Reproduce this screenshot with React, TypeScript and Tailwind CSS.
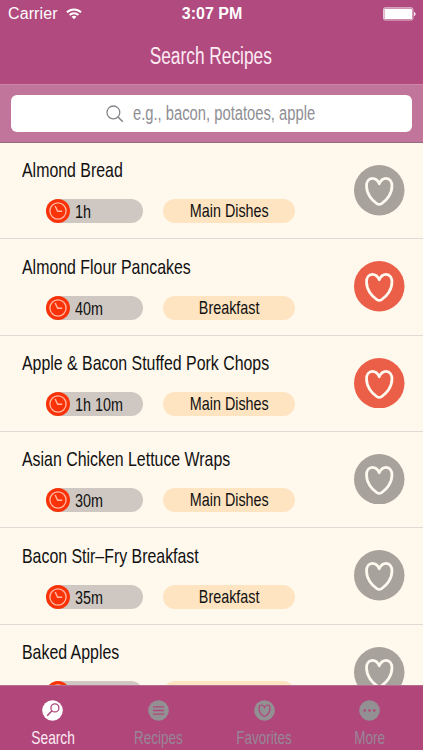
import type { ReactNode } from 'react'

type Recipe = {
  name: string
  time: string
  category: string
  favorite?: boolean
}

const recipes: Recipe[] = [
  { name: 'Almond Bread', time: '1h', category: 'Main Dishes' },
  { name: 'Almond Flour Pancakes', time: '40m', category: 'Breakfast', favorite: true },
  { name: 'Apple & Bacon Stuffed Pork Chops', time: '1h 10m', category: 'Main Dishes', favorite: true },
  { name: 'Asian Chicken Lettuce Wraps', time: '30m', category: 'Main Dishes' },
  { name: 'Bacon Stir–Fry Breakfast', time: '35m', category: 'Breakfast' },
  { name: 'Baked Apples', time: '', category: '' },
]

const heart =
  'M25 18.6C23.4 14.8 21 13.2 18.2 13.2C14.6 13.2 12.4 16.4 12.4 20.6C12.4 28.6 17.6 35.2 22.6 38.2C24.2 39.2 25.8 39.2 27.4 38.2C32.4 35.2 37.6 28.6 37.6 20.6C37.6 16.4 35.4 13.2 31.8 13.2C29 13.2 26.6 14.8 25 18.6Z'

function StatusBar() {
  return (
    <div className="grid h-[28px] grid-cols-3 items-center pl-2 pr-[7px] text-white">
      <div className="flex items-center gap-[8px]">
        <span className="text-[16px] leading-none tracking-[0.1px]">Carrier</span>
        <svg width="16" height="12.2" viewBox="0 0 17 13" fill="none" stroke="white" strokeWidth="2.1">
          <path d="M1 4.6C5.2 0.5 11.8 0.5 16 4.6" />
          <path d="M3.8 7.5C6.4 4.9 10.6 4.9 13.2 7.5" />
          <path d="M8.5 12L5.9 9.4C7.3 8 9.7 8 11.1 9.4Z" fill="white" stroke="none" />
        </svg>
      </div>
      <span className="text-center text-[16px] font-bold leading-none">3:07 PM</span>
      <svg className="justify-self-end" width="33" height="14" viewBox="0 0 33 14">
        <rect x="0.5" y="0.8" width="29.4" height="12.2" rx="1.6" fill="none" stroke="white" strokeOpacity="0.7" />
        <rect x="1.4" y="1.7" width="27.6" height="10.4" rx="0.6" fill="white" />
        <path d="M31.1 4.9C33 5.3 33 8.6 31.1 9Z" fill="white" />
      </svg>
    </div>
  )
}

function SearchBar() {
  return (
    <div className="h-[59px] border-b border-t border-b-[#966b82] border-t-[#cb87a8] bg-[#c1759b] px-[11px] pt-[10px]">
      <div className="flex h-[37px] items-center rounded-[6px] bg-white pl-[95px] text-[#8e8e93]">
        <svg width="18" height="18" viewBox="0 0 18 18" fill="none" stroke="#85858a" strokeWidth="1.3">
          <circle cx="7.4" cy="7.4" r="6.4" />
          <path d="M12 12L16.8 16.8" strokeWidth="1.6" />
        </svg>
        <span className="ml-[9px] origin-left scale-x-[0.738] whitespace-nowrap pb-px text-[20px] leading-none">
          e.g., bacon, potatoes, apple
        </span>
      </div>
    </div>
  )
}

function RecipeRow({ recipe }: { recipe: Recipe }) {
  return (
    <li className="flex h-[96.33px] shrink-0 items-start justify-between border-b border-[#dedad6] pl-[22px] pr-[18.5px]">
      <div className="pt-[15.4px]">
        <h2 className="w-[250px] origin-left scale-x-[0.757] whitespace-nowrap text-[21px] leading-[24px]">
          {recipe.name}
        </h2>
        <div className="ml-6 mt-[17px] flex gap-[20px]">
          <div className="flex h-6 w-[97px] items-center rounded-full bg-[#cfc8c2]">
            <svg width="24" height="24" viewBox="0 0 24 24" fill="none">
              <circle cx="12" cy="12" r="12" fill="#fa3208" />
              <circle cx="12" cy="12" r="8.1" stroke="#ffb9a4" strokeWidth="1.3" />
              <path d="M9.2 7L11.6 12.3H16.2" stroke="#ffb9a4" strokeWidth="1.4" />
            </svg>
            <span className="ml-[5px] mt-px origin-left scale-x-[0.755] whitespace-nowrap text-[19px] leading-none">
              {recipe.time}
            </span>
          </div>
          <div className="flex h-6 w-[132px] items-center justify-center rounded-full bg-[#fee4c1]">
            <span className="scale-x-[0.755] whitespace-nowrap pb-px text-[19px] leading-none">{recipe.category}</span>
          </div>
        </div>
      </div>
      <svg className="mt-[22px] shrink-0" width="50.5" height="50.5" viewBox="0 0 50 50">
        <circle cx="25" cy="25" r="25" fill={recipe.favorite ? '#eb5f49' : '#a7a29c'} />
        <path d={heart} fill="none" stroke="#fffaf0" strokeWidth="2.7" strokeLinejoin="round" />
      </svg>
    </li>
  )
}

function Tab({ label, active, children }: { label: string; active?: boolean; children: ReactNode }) {
  return (
    <div className="flex flex-1 flex-col items-center pr-[0.5px] pt-[13.5px]">
      <svg
        className={active ? 'text-white' : 'text-[#929093]'}
        width="21"
        height="21"
        viewBox="0 0 21 21"
        fill="none"
        stroke="#b1467b"
      >
        <circle cx="10.5" cy="10.5" r="10.3" fill="currentColor" stroke="none" />
        {children}
      </svg>
      <span
        className={
          active
            ? 'mt-[7.5px] scale-x-[0.725] whitespace-nowrap text-[19px] leading-[20px] text-[#fdebf4]'
            : 'mt-[7.5px] scale-x-[0.71] whitespace-nowrap text-[19px] leading-[20px] text-[#978696]'
        }
      >
        {label}
      </span>
    </div>
  )
}

export default function App() {
  return (
    <div className="flex h-[750px] w-[423px] flex-col overflow-hidden bg-[#fff8ed] font-['Liberation_Sans',Arial,sans-serif] text-[#111]">
      <header className="h-[84px] shrink-0 bg-[#b14a7e]">
        <StatusBar />
        <h1 className="mt-[14px] scale-x-[0.752] pr-[2px] text-center text-[23px] leading-[28px] text-[#fdebf4]">Search Recipes</h1>
      </header>
      <SearchBar />

      {/* Recipe list */}
      <ul className="flex min-h-0 flex-1 flex-col overflow-hidden">
        {recipes.map((recipe) => (
          <RecipeRow key={recipe.name} recipe={recipe} />
        ))}
      </ul>

      {/* Tab bar */}
      <nav className="flex h-[65px] shrink-0 overflow-hidden border-t border-[#b56c92] bg-[#b1467b]">
        <Tab label="Search" active>
          <circle cx="12.9" cy="7.9" r="4" strokeWidth="1.3" />
          <path d="M10 10.8L5.2 15.8" strokeWidth="1.5" />
        </Tab>
        <Tab label="Recipes">
          <path d="M5 6.8H16M5 10.5H16M5 14.2H16" strokeWidth="1.3" />
        </Tab>
        <Tab label="Favorites">
          <path d={heart} transform="translate(-0.5 -0.8) scale(0.44)" strokeWidth="2.8" />
        </Tab>
        <Tab label="More">
          <g fill="#b1467b" stroke="none">
            <circle cx="5.7" cy="10.5" r="1.3" />
            <circle cx="10.5" cy="10.5" r="1.3" />
            <circle cx="15.3" cy="10.5" r="1.3" />
          </g>
        </Tab>
      </nav>
    </div>
  )
}
